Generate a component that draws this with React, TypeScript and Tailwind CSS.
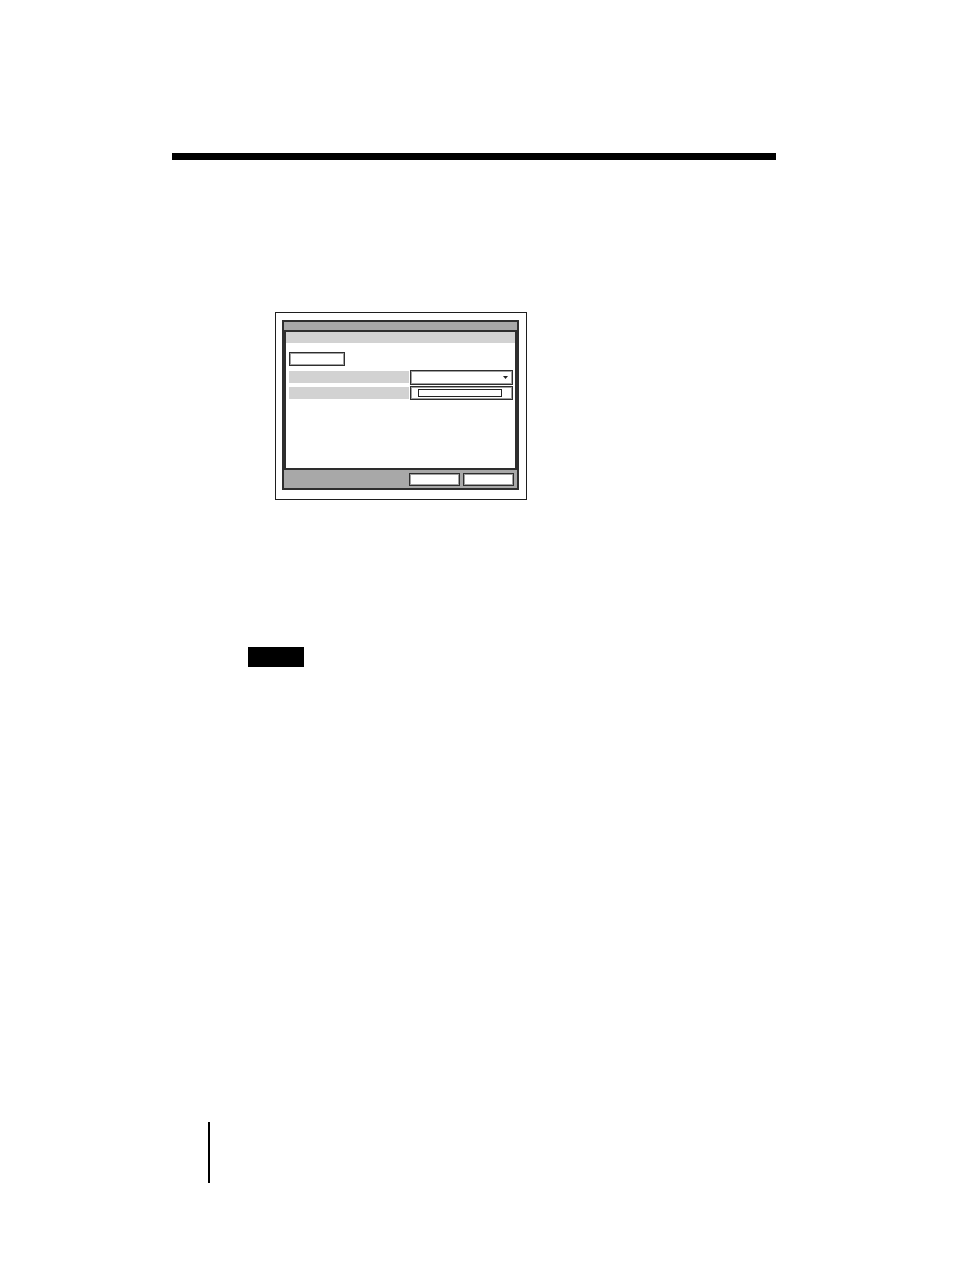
export default function App() {
  return (
    <div className="w-[954px] h-[1269px] bg-white flex flex-col items-start" style={{ fontFamily: '"Liberation Sans", Arial, sans-serif' }}>
      <div className="mt-[153px] ml-[172px] w-[604px] h-[7px] bg-black" />

      <div className="mt-[152px] ml-[275px] w-[252px] h-[188px] border-[1.5px] border-[#1e1e1e] bg-white pt-[6.5px] pl-[5.5px]">
        <div className="w-[237px] h-[170px] border-2 border-[#2e2e2e] bg-[#a8a8a8] flex flex-col">
          <div className="h-[8px] shrink-0" />
          <div className="h-[140px] shrink-0 border-2 border-[#2e2e2e] bg-white flex flex-col">
            <div className="h-[11px] bg-[#d2d2d2] shrink-0" />
            <div className="mt-[9px] ml-[3px] w-[56px] h-[14px] border-[1.5px] border-[#2e2e2e] bg-white shadow-[inset_0_0_0_1px_#a0a0a0]" />
            <div className="mt-[4px] ml-[3px] flex items-center gap-[1px]">
              <div className="w-[120px] h-[12px] bg-[#d2d2d2]" />
              <div className="w-[103px] h-[15px] border-[1.5px] border-[#2e2e2e] bg-white shadow-[inset_0_0_0_1px_#a0a0a0] flex items-center justify-end pr-[4px]">
                <svg width="5" height="3" viewBox="0 0 5 3">
                  <path d="M0 0 H5 L2.5 3 Z" fill="#222" />
                </svg>
              </div>
            </div>
            <div className="mt-[1px] ml-[3px] flex items-center gap-[1px]">
              <div className="w-[120px] h-[12px] bg-[#d2d2d2]" />
              <div className="w-[103px] h-[14px] border-[1.5px] border-[#2e2e2e] bg-white shadow-[inset_0_0_0_1px_#a0a0a0] flex items-center pl-[7.5px]">
                <div className="w-[84px] h-[8px] border border-[#222] bg-white" />
              </div>
            </div>
          </div>
          <div className="mt-[3px] mr-[3px] flex justify-end gap-[3px]">
            <div className="w-[51px] h-[13px] border-[1.5px] border-[#2e2e2e] bg-white shadow-[inset_0_0_0_1px_#a0a0a0]" />
            <div className="w-[51px] h-[13px] border-[1.5px] border-[#2e2e2e] bg-white shadow-[inset_0_0_0_1px_#a0a0a0]" />
          </div>
        </div>
      </div>

      <div className="mt-[147px] ml-[248px] w-[56px] h-[20px] bg-black" />

      <div className="mt-[455px] ml-[208px] w-[2px] h-[61px] bg-black" />
    </div>
  );
}
